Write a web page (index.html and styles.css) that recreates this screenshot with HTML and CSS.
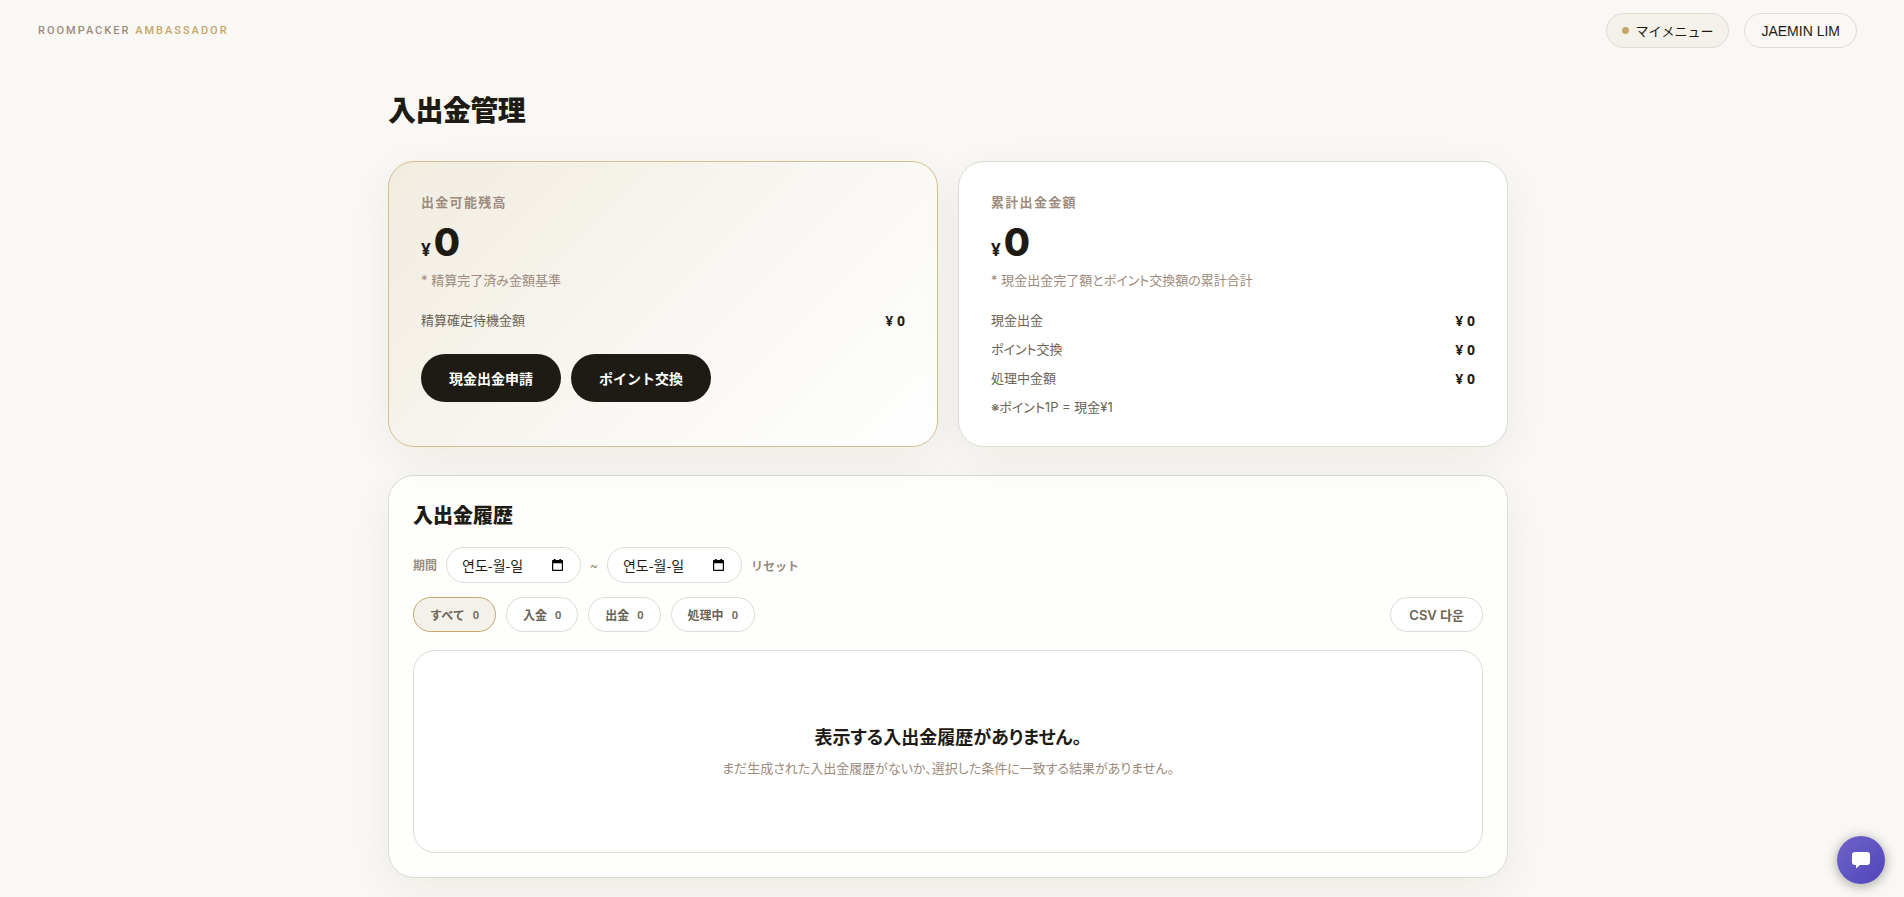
FILE: index.html
```html
<!DOCTYPE html>
<html lang="ja">
<head>
<meta charset="utf-8">
<meta name="viewport" content="width=device-width, initial-scale=1">
<title>入出金管理</title>
<link rel="stylesheet" href="styles.css">
</head>
<body>
<header class="topbar">
  <a class="brand" href="#">ROOMPACKER <span class="brand-accent">AMBASSADOR</span></a>
  <nav class="topnav">
    <button class="nav-pill nav-pill-active" type="button"><span class="dot"></span>マイメニュー</button>
    <button class="nav-pill nav-user" type="button">JAEMIN LIM</button>
  </nav>
</header>

<main class="page">
  <h1 class="page-title">入出金管理</h1>

  <div class="cards">
    <section class="card card-highlight">
      <h2 class="card-label">出金可能残高</h2>
      <p class="amount"><span class="currency">¥</span>0</p>
      <p class="note">* 精算完了済み金額基準</p>
      <dl class="rows">
        <div class="row"><dt>精算確定待機金額</dt><dd>¥ 0</dd></div>
      </dl>
      <div class="actions">
        <button class="btn-dark" type="button">現金出金申請</button>
        <button class="btn-dark" type="button">ポイント交換</button>
      </div>
    </section>

    <section class="card">
      <h2 class="card-label">累計出金金額</h2>
      <p class="amount"><span class="currency">¥</span>0</p>
      <p class="note">* 現金出金完了額とポイント交換額の累計合計</p>
      <dl class="rows">
        <div class="row"><dt>現金出金</dt><dd>¥ 0</dd></div>
        <div class="row"><dt>ポイント交換</dt><dd>¥ 0</dd></div>
        <div class="row"><dt>処理中金額</dt><dd>¥ 0</dd></div>
        <div class="row"><dt>※ポイント1P = 現金¥1</dt></div>
      </dl>
    </section>
  </div>

  <section class="panel">
    <h2 class="panel-title">入出金履歴</h2>
    <div class="period">
      <label class="period-label" for="from">期間</label>
      <div class="date-box">
        <input class="date-input" id="from" type="text" value="연도-월-일">
        <svg class="calendar" viewBox="0 0 12 13" aria-hidden="true"><path d="M2 0h2v1h4V0h2v1h1a1 1 0 0 1 1 1v10a1 1 0 0 1-1 1H1a1 1 0 0 1-1-1V2a1 1 0 0 1 1-1h1zM1.300 4.500v7.200h9.400V4.500z" fill-rule="evenodd"/></svg>
      </div>
      <span class="tilde">~</span>
      <div class="date-box">
        <input class="date-input" id="to" type="text" value="연도-월-일" aria-label="期間 終了">
        <svg class="calendar" viewBox="0 0 12 13" aria-hidden="true"><path d="M2 0h2v1h4V0h2v1h1a1 1 0 0 1 1 1v10a1 1 0 0 1-1 1H1a1 1 0 0 1-1-1V2a1 1 0 0 1 1-1h1zM1.300 4.500v7.200h9.400V4.500z" fill-rule="evenodd"/></svg>
      </div>
      <button class="reset" type="button">リセット</button>
    </div>
    <div class="toolbar">
      <div class="filters">
        <button class="filter filter-active" type="button">すべて<span class="count">0</span></button>
        <button class="filter" type="button">入金<span class="count">0</span></button>
        <button class="filter" type="button">出金<span class="count">0</span></button>
        <button class="filter" type="button">処理中<span class="count">0</span></button>
      </div>
      <button class="filter csv" type="button">CSV 다운</button>
    </div>
    <div class="empty">
      <h3 class="empty-title">表示する入出金履歴がありません。</h3>
      <p class="empty-text">まだ生成された入出金履歴がないか、選択した条件に一致する結果がありません。</p>
    </div>
  </section>
</main>

<button class="chat" type="button" aria-label="チャット">
  <svg class="chat-icon" viewBox="0 0 20 18" aria-hidden="true"><path d="M4 1h12a3 3 0 0 1 3 3v7a3 3 0 0 1-3 3H9l-4 3.600V14H4a3 3 0 0 1-3-3V4a3 3 0 0 1 3-3z"/></svg>
</button>
</body>
</html>
```
FILE: styles.css
```css
:root {
  --ink: #1e1b14;
  --muted: #9c8b7c;
  --body: #6b6355;
  --gold: #c5a76b;
  --line: #dedbd3;
  --sans: "Inter", "Noto Sans CJK JP", "Noto Sans CJK KR", sans-serif;
}

* { box-sizing: border-box; }

body {
  margin: 0;
  padding-right: 8px;
  background: #f9f8f4;
  color: var(--ink);
  font-family: var(--sans);
  font-size: 13px;
  line-height: 21px;
  font-feature-settings: "palt";
}

h1, h2, h3, p, dl, dd { margin: 0; }

button, input { font-family: inherit; font-feature-settings: normal; color: inherit; }

button { cursor: pointer; }

.topbar {
  display: flex;
  align-items: center;
  justify-content: space-between;
  height: 61px;
  padding: 0 39px 0 38px;
}

.brand {
  color: var(--muted);
  font-family: "Roboto", sans-serif;
  font-size: 11px;
  font-weight: 500;
  letter-spacing: 2px;
  text-decoration: none;
}

.brand-accent { color: var(--gold); }

.topnav { display: flex; gap: 15px; }

.nav-pill {
  display: flex;
  align-items: center;
  gap: 6px;
  height: 35px;
  padding: 0 16px;
  border: 1px solid var(--line);
  border-radius: 18px;
  background: transparent;
  font-size: 13px;
}

.nav-user {
  font-family: "Liberation Sans", sans-serif;
  font-size: 14px;
}

.nav-pill-active { background: #f4f1ea; padding: 0 15px; }

.dot {
  width: 7px;
  height: 7px;
  border-radius: 50%;
  background: var(--gold);
}

.page {
  max-width: 1120px;
  margin: 0 auto;
  padding: 28px 0 40px;
}

.page-title {
  margin-bottom: 28px;
  font-size: 28px;
  font-weight: 800;
  line-height: 44px;
  letter-spacing: -0.02em;
}

.cards {
  display: grid;
  grid-template-columns: 1fr 1fr;
  gap: 20px;
}

.card {
  padding: 28px 32px;
  border: 1px solid var(--line);
  border-radius: 26px;
  background: #fff;
  box-shadow: 0 12px 44px rgba(30, 27, 20, 0.06);
}

.card-highlight {
  border-color: #d5bf92;
  background: linear-gradient(135deg, #f2ece0 0%, #f8f6f1 50%, #fff 100%);
}

.card-label {
  color: var(--muted);
  font-size: 13px;
  font-weight: 700;
  line-height: 24px;
  letter-spacing: 0.1em;
}

.amount {
  display: flex;
  align-items: baseline;
  gap: 3px;
  margin-top: 8px;
  font-size: 38px;
  font-weight: 800;
  line-height: 40px;
}

.currency {
  font-family: "Open Sans", sans-serif;
  font-size: 17px;
  font-weight: 700;
}

.note { color: var(--muted); }

.rows {
  display: grid;
  gap: 8px;
  margin-top: 19px;
}

.row {
  display: flex;
  justify-content: space-between;
  color: var(--body);
}

.row dd {
  color: var(--ink);
  font-family: "Noto Sans", sans-serif;
  font-size: 14px;
  font-weight: 700;
}

.actions {
  display: flex;
  gap: 10px;
  margin-top: 23px;
}

.btn-dark {
  height: 48px;
  padding: 0 28px;
  border: 0;
  border-radius: 24px;
  background: #1e1b14;
  color: #fff;
  font-size: 14px;
  font-weight: 700;
}

.panel {
  margin-top: 28px;
  padding: 24px;
  border: 1px solid var(--line);
  border-radius: 26px;
  background: #fefefc;
  box-shadow: 0 12px 44px rgba(30, 27, 20, 0.06);
}

.panel-title {
  font-size: 20px;
  font-weight: 800;
  line-height: 32px;
}

.period {
  display: flex;
  align-items: center;
  gap: 9px;
  margin-top: 15px;
  color: var(--muted);
  font-size: 12px;
}

.period-label { font-weight: 700; }

.date-box {
  display: flex;
  align-items: center;
  width: 135px;
  height: 36px;
  padding: 0 17px 0 15px;
  border: 1px solid var(--line);
  border-radius: 18px;
  background: #fff;
  color: var(--ink);
}

.date-input {
  flex: 1;
  min-width: 0;
  padding: 0;
  border: 0;
  background: transparent;
  font-family: "Noto Sans CJK KR", sans-serif;
  font-size: 14px;
}

.calendar { width: 11px; height: 12px; fill: #000; }

.reset {
  padding: 0;
  border: 0;
  background: transparent;
  color: var(--muted);
  font-size: 12px;
  font-weight: 700;
}

.toolbar {
  display: flex;
  justify-content: space-between;
  margin-top: 14px;
}

.filters { display: flex; gap: 10px; }

.filter {
  display: flex;
  align-items: center;
  gap: 8px;
  height: 35px;
  padding: 0 16px;
  border: 1px solid var(--line);
  border-radius: 18px;
  background: #fff;
  color: var(--body);
  font-size: 12px;
  font-weight: 700;
}

.filter-active { border-color: var(--gold); background: #f4f1ea; }

.count { font-family: "Noto Sans", sans-serif; font-size: 11px; font-weight: 600; }

.csv { padding: 0 18px; font-size: 13px; font-weight: 600; }

.empty {
  display: flex;
  flex-direction: column;
  align-items: center;
  margin-top: 18px;
  padding: 73px 24px;
  border: 1px solid var(--line);
  border-radius: 22px;
  background: #fff;
}

.empty-title {
  font-size: 18px;
  font-weight: 700;
  line-height: 28px;
}

.empty-text {
  margin-top: 6px;
  color: var(--muted);
}

.chat {
  position: fixed;
  right: 19px;
  bottom: 13px;
  display: flex;
  align-items: center;
  justify-content: center;
  width: 48px;
  height: 48px;
  padding: 0;
  border: 0;
  border-radius: 50%;
  background: linear-gradient(135deg, #6f63c6, #5145bd);
  box-shadow: 0 2px 12px rgba(30, 27, 20, 0.4);
}

.chat-icon { width: 20px; height: 18px; fill: #fff; }
```
